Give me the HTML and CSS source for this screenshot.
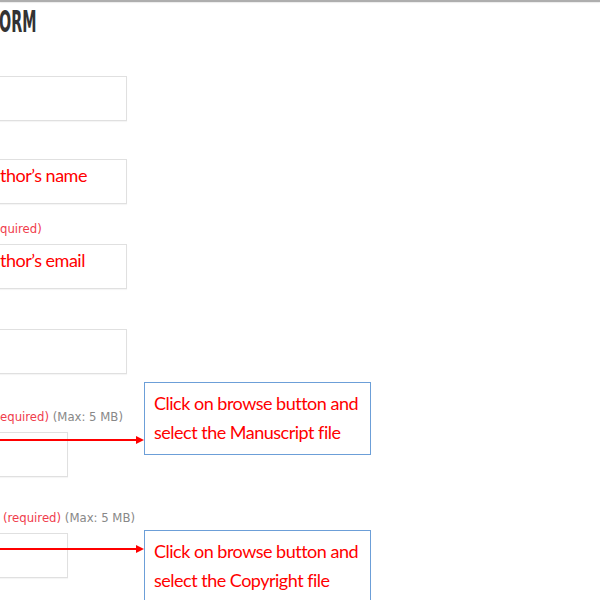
FILE: index.html
```html
<!DOCTYPE html>
<html lang="en">
<head>
    <meta charset="UTF-8">
    <meta name="viewport" content="width=device-width, initial-scale=1.0">
    <title>Submission Form</title>
    <link rel="stylesheet" href="styles.css">
</head>
<body>
    <div class="topline"></div>

    <div class="sheet">
        <h1 class="title">ORM</h1>

        <div class="field">
            <label class="label">&nbsp;</label>
            <div class="box"></div>
        </div>

        <div class="field tight">
            <label class="label">&nbsp;</label>
            <div class="box">thor’s name</div>
        </div>

        <div class="field">
            <label class="label"><span class="req">quired)</span></label>
            <div class="box">thor’s email</div>
        </div>

        <div class="field">
            <label class="label">&nbsp;</label>
            <div class="box"></div>
        </div>

        <div class="field file">
            <label class="label"><span class="req">equired)</span> <span class="hint">(Max: 5 MB)</span></label>
            <div class="box small"></div>
            <div class="note note-one">
                <svg class="arrow" width="144" height="8" viewBox="0 0 144 8">
                    <line x1="0" y1="4" x2="138" y2="4" stroke="#ff0000" stroke-width="2"/>
                    <polygon points="136,0 144,4 136,8" fill="#ff0000"/>
                </svg>
                <div class="callout">Click on browse button and<br>select the Manuscript file</div>
            </div>
        </div>

        <div class="field file">
            <label class="label indent"><span class="req">(required)</span> <span class="hint">(Max: 5 MB)</span></label>
            <div class="box small"></div>
            <div class="note note-two">
                <svg class="arrow" width="144" height="8" viewBox="0 0 144 8">
                    <line x1="0" y1="4" x2="138" y2="4" stroke="#ff0000" stroke-width="2"/>
                    <polygon points="136,0 144,4 136,8" fill="#ff0000"/>
                </svg>
                <div class="callout">Click on browse button and<br>select the Copyright file</div>
            </div>
        </div>
    </div>
</body>
</html>
```

FILE: styles.css
```css
html {
    height: 100%;
    overflow: hidden;
}
body {
    height: 100%;
    margin: 0;
    background-color: #ffffff;
    font-family: "DejaVu Sans Condensed", "DejaVu Sans", sans-serif;
}
.topline {
    height: 2px;
    background-color: #aeaeae;
    box-shadow: 0 1px 1px rgba(0,0,0,0.08);
}
.sheet {
    display: flex;
    flex-direction: column;
    align-items: flex-start;
}
.title {
    margin: 5px 0 0 -1px;
    font-size: 30px;
    line-height: 29px;
    font-weight: bold;
    color: #333;
    transform: scaleX(0.53);
    transform-origin: left center;
}
.field {
    margin-top: 15px;
}
.field.tight {
    margin-top: 13px;
}
.field.file {
    position: relative;
    margin-top: 33px;
}
.field.file + .field.file {
    margin-top: 31px;
}
.label {
    display: block;
    height: 20px;
    margin-bottom: 5px;
    font-size: 13px;
    line-height: 20px;
    white-space: nowrap;
}
.label.indent {
    padding-left: 3px;
}
.req {
    color: #f03c4c;
}
.hint {
    color: #888;
}
.box {
    box-sizing: border-box;
    width: 147px;
    height: 45px;
    margin-left: -20px;
    padding-left: 19px;
    border: 1px solid #e0e0e0;
    box-shadow: 0 1px 1px rgba(0,0,0,0.04);
    font-family: Lato, "Liberation Sans", sans-serif;
    font-size: 18px;
    letter-spacing: -0.5px;
    line-height: 30px;
    color: #ff0000;
    white-space: nowrap;
}
.box.small {
    width: 88px;
}
.note {
    position: absolute;
    left: 0;
    display: flex;
    align-items: flex-start;
}
.note-one {
    top: -25px;
}
.note-one .arrow {
    margin-top: 54px;
}
.note-two {
    top: 22px;
}
.note-two .arrow {
    margin-top: 15px;
}
.arrow {
    display: block;
    flex: none;
}
.callout {
    box-sizing: border-box;
    width: 227px;
    padding: 6px 9px 7px;
    border: 1px solid #6c9fd8;
    background: #fff;
    font-family: Lato, "Liberation Sans", sans-serif;
    font-size: 18px;
    letter-spacing: -0.5px;
    line-height: 29px;
    color: #ff0000;
    white-space: nowrap;
}
```
